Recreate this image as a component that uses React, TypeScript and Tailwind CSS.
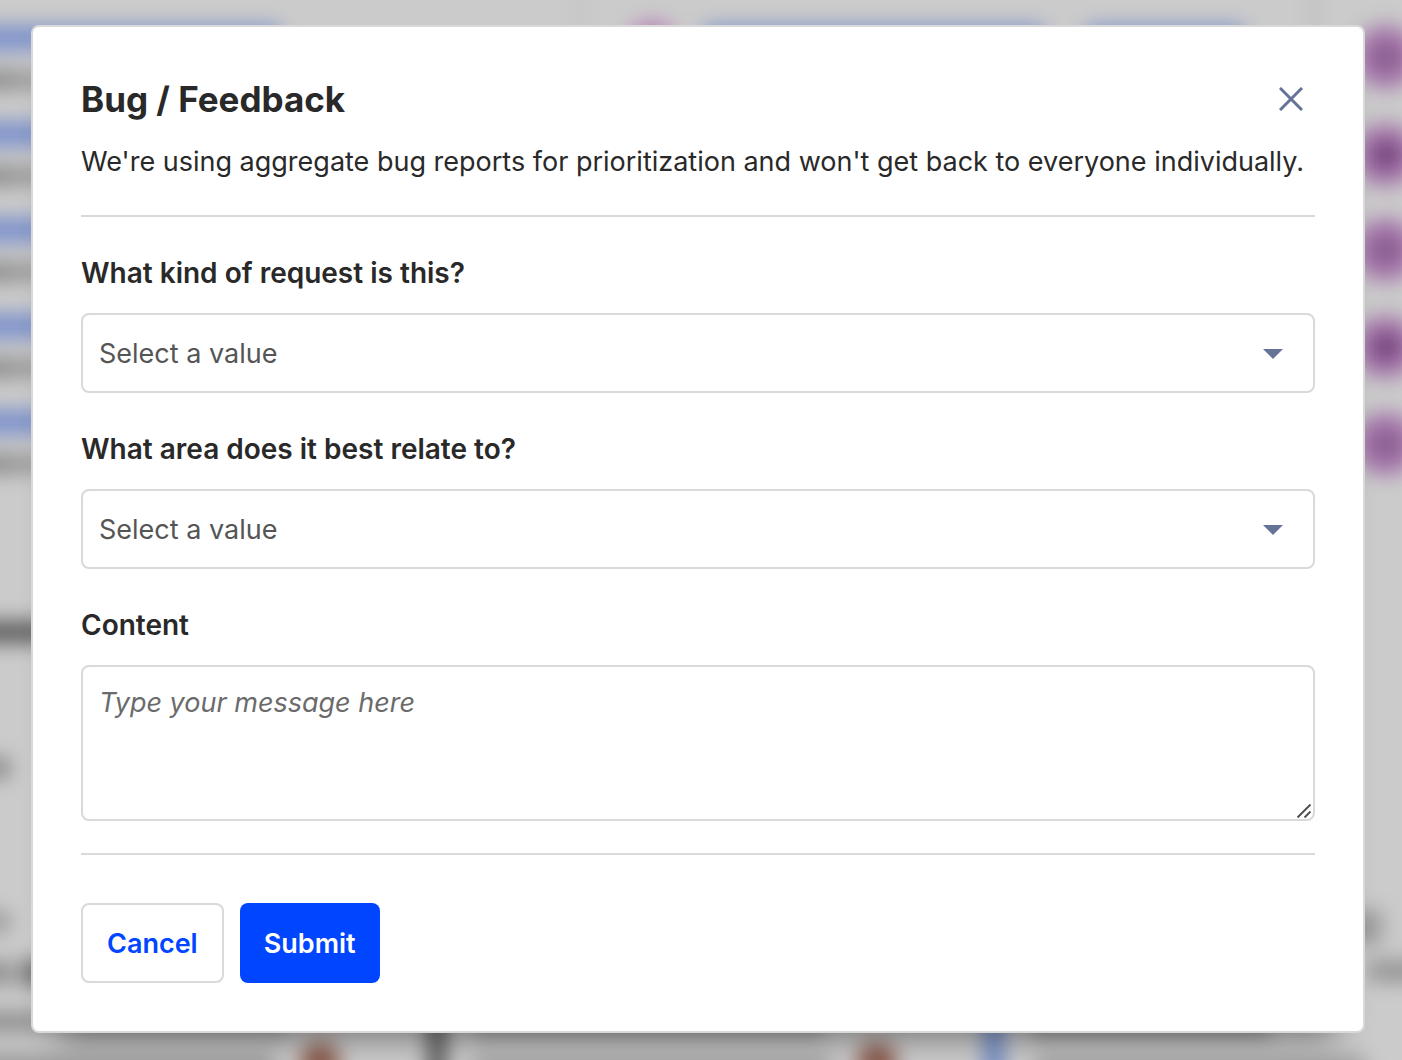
import React from "react";

const linkRows = [39, 135, 231, 327, 423];
const badges = [
  { y: 57, fill: "#85588a" },
  { y: 155, fill: "#6b3a73" },
  { y: 250, fill: "#825587" },
  { y: 347, fill: "#6b3a73" },
  { y: 444, fill: "#85588a" },
];

function Backdrop() {
  return (
    <svg
      aria-hidden="true"
      className="absolute inset-0 h-full w-full"
      viewBox="0 0 1402 1060"
      preserveAspectRatio="none"
    >
      <defs>
        <filter
          id="soft"
          x="-100"
          y="-100"
          width="1602"
          height="1260"
          filterUnits="userSpaceOnUse"
          colorInterpolationFilters="sRGB"
        >
          <feGaussianBlur stdDeviation="10" />
        </filter>
      </defs>
      <g filter="url(#soft)">
        <rect x="-60" y="-60" width="1522" height="1180" fill="#cbcbcb" />
        <rect x="574" y="-60" width="10" height="600" fill="#c4c4c4" />
        <rect x="1308" y="-60" width="14" height="600" fill="#c2c2c2" />
        {linkRows.map((y) => (
          <g key={y}>
            <rect x="-40" y={y - 13} width="320" height="24" fill="#7a8fcb" />
            <rect x="-40" y={y + 32} width="54" height="18" fill="#868686" />
            <rect x="14" y={y + 32} width="60" height="18" fill="#969696" />
          </g>
        ))}
        <circle cx="652" cy="46" r="25" fill="#b880b8" />
        <rect x="704" y="26" width="340" height="24" fill="#7a8fcb" />
        <rect x="1086" y="26" width="158" height="24" fill="#7a8fcb" />
        {badges.map((b) => (
          <g key={b.y}>
            <circle cx="1386" cy={b.y} r="32" fill="#a577ab" />
            <circle cx="1386" cy={b.y} r="13" fill={b.fill} />
          </g>
        ))}
        <rect x="-40" y="621" width="100" height="22" fill="#5c5c5c" />
        <circle cx="-2" cy="768" r="12" fill="#808080" />
        <circle cx="-2" cy="922" r="12" fill="#959595" />
        <rect x="-40" y="962" width="54" height="22" fill="#8c8c8c" />
        <rect x="22" y="960" width="40" height="26" fill="#6a6a6a" />
        <rect x="-40" y="1012" width="100" height="20" fill="#8d8d8d" />
        <rect x="60" y="1020" width="230" height="16" fill="#a0a0a0" />
        <rect x="474" y="1018" width="350" height="18" fill="#989898" />
        <rect x="1030" y="1018" width="240" height="18" fill="#909090" />
        <rect x="-40" y="1053" width="315" height="30" fill="#9c9c9c" />
        <rect x="474" y="1056" width="356" height="30" fill="#9e9e9e" />
        <rect x="1036" y="1056" width="330" height="30" fill="#9e9e9e" />
        <rect x="1340" y="910" width="42" height="34" fill="#999999" />
        <rect x="1368" y="960" width="90" height="22" fill="#949494" />
        <rect x="428" y="1000" width="18" height="110" fill="#555555" />
        <rect x="984" y="1000" width="20" height="110" fill="#6f8ac6" />
        <circle cx="320" cy="1062" r="20" fill="#8a5a4c" />
        <circle cx="877" cy="1062" r="20" fill="#8a5a4c" />
      </g>
    </svg>
  );
}

const labelClass = "block text-[28px] leading-10 font-semibold";

function SelectField({ id, label, options }: { id: string; label: string; options: string[] }) {
  return (
    <div className="flex flex-col gap-5">
      <label htmlFor={id} className={labelClass}>
        {label}
      </label>
      <div className="relative">
        <select
          id={id}
          defaultValue=""
          className="block h-20 w-full appearance-none rounded-lg border-2 border-[#d9d9d9] bg-white pt-0.5 pr-16 pl-4 text-[27px] text-[#555555]"
        >
          <option value="">Select a value</option>
          {options.map((o) => (
            <option key={o}>{o}</option>
          ))}
        </select>
        <svg
          aria-hidden="true"
          className="pointer-events-none absolute top-9 right-8 h-2.5 w-5"
          viewBox="0 0 20 10"
        >
          <path d="M0 0h20L10 10z" fill="#667399" />
        </svg>
      </div>
    </div>
  );
}

export default function App() {
  return (
    <div className="relative min-h-screen overflow-hidden bg-[#cbcbcb] pt-[25px] pr-[37px] pb-[27px] pl-[31px] font-['Inter',sans-serif] text-[#292929]">
      <Backdrop />
      <div
        role="dialog"
        aria-modal="true"
        aria-labelledby="dialog-title"
        className="relative rounded-lg border-2 border-[#d9d9d9] bg-white p-12 shadow-[0_32px_32px_-28px_rgba(0,0,0,0.45)]"
      >
        <header className="border-b-2 border-[#d9d9d9] pb-[33px]">
          <div className="flex items-center justify-between">
            <h1 id="dialog-title" className="text-[35px] leading-[48px] font-bold">
              Bug / Feedback
            </h1>
            <button type="button" aria-label="Close" className="flex h-12 w-12 items-center justify-center">
              <svg className="h-6 w-6" viewBox="0 0 24 24" fill="none" stroke="#667399" strokeWidth="3">
                <path d="M1 1l22 22M23 1L1 23" />
              </svg>
            </button>
          </div>
          <p className="mt-[19px] text-[27px] leading-10">
            We're using aggregate bug reports for prioritization and won't get back to everyone individually.
          </p>
        </header>

        <form onSubmit={(e) => e.preventDefault()}>
          <div className="flex flex-col gap-9 border-b-2 border-[#d9d9d9] pt-9 pb-8">
            <SelectField
              id="kind"
              label="What kind of request is this?"
              options={["Bug", "Feedback"]}
            />
            <SelectField
              id="area"
              label="What area does it best relate to?"
              options={["General", "Other"]}
            />
            <div className="flex flex-col gap-5">
              <label htmlFor="content" className={labelClass}>
                Content
              </label>
              <div className="relative">
                <textarea
                  id="content"
                  placeholder="Type your message here"
                  className="block h-[156px] w-full rounded-lg border-2 border-[#d9d9d9] bg-white px-4 py-4 text-[27px] leading-10 placeholder:text-[#6b6b6b] placeholder:italic [&::-webkit-resizer]:hidden"
                />
                <svg
                  aria-hidden="true"
                  className="pointer-events-none absolute right-[3px] bottom-0.5 h-4 w-4"
                  viewBox="0 0 16 16"
                  fill="none"
                  stroke="#4d4d4d"
                  strokeWidth="1.8"
                >
                  <path d="M1.5 14.5l13-13M8.5 14.5l6-6" />
                </svg>
              </div>
            </div>
          </div>

          <div className="flex gap-4 pt-12">
            <button
              type="button"
              className="h-20 rounded-lg border-2 border-[#d9d9d9] bg-white px-6 pt-0.5 text-[27px] font-semibold text-[#0045ff]"
            >
              Cancel
            </button>
            <button
              type="submit"
              className="h-20 rounded-lg bg-[#0045ff] px-6 pt-0.5 text-[27px] font-semibold text-white"
            >
              Submit
            </button>
          </div>
        </form>
      </div>
    </div>
  );
}
